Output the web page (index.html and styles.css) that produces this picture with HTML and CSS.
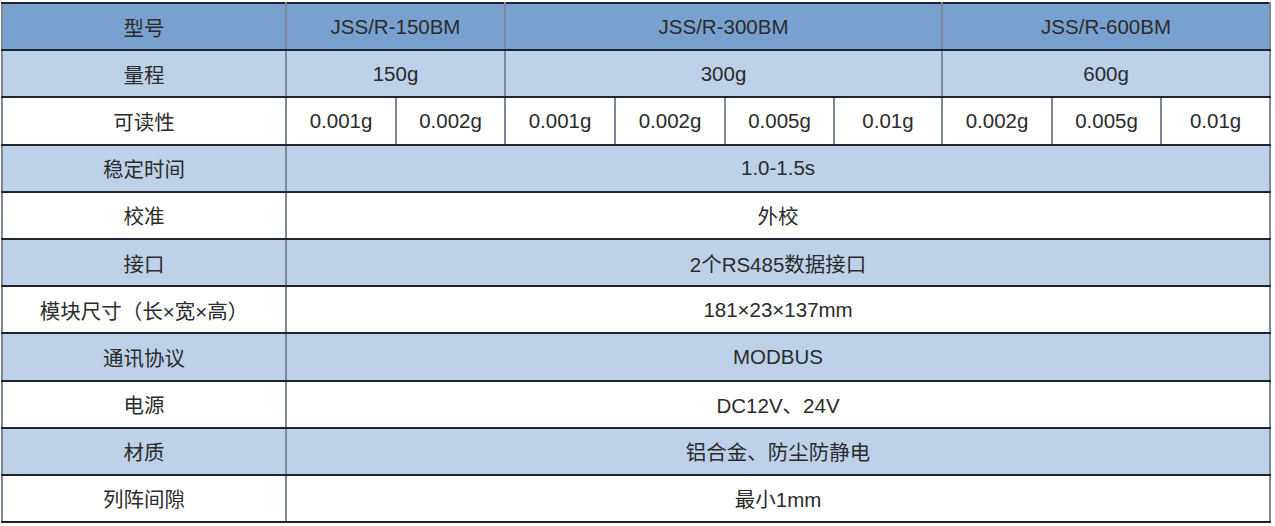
FILE: index.html
```html
<!DOCTYPE html>
<html lang="zh-CN">
<head>
<meta charset="utf-8">
<title>规格参数</title>
<link rel="stylesheet" href="styles.css">
</head>
<body>
<table class="spec">
  <colgroup>
    <col class="c-label">
    <col class="c-w110"><col class="c-w109"><col class="c-w110"><col class="c-w110"><col class="c-w109"><col class="c-w108"><col class="c-w110"><col class="c-w109"><col class="c-w109">
  </colgroup>
  <tr class="row-head">
    <td>型号</td>
    <td colspan="2">JSS/R-150BM</td>
    <td colspan="4">JSS/R-300BM</td>
    <td colspan="3">JSS/R-600BM</td>
  </tr>
  <tr class="row-light">
    <td>量程</td>
    <td colspan="2">150g</td>
    <td colspan="4">300g</td>
    <td colspan="3">600g</td>
  </tr>
  <tr class="row-white">
    <td>可读性</td>
    <td>0.001g</td>
    <td>0.002g</td>
    <td>0.001g</td>
    <td>0.002g</td>
    <td>0.005g</td>
    <td>0.01g</td>
    <td>0.002g</td>
    <td>0.005g</td>
    <td>0.01g</td>
  </tr>
  <tr class="row-light"><td>稳定时间</td><td colspan="9">1.0-1.5s</td></tr>
  <tr class="row-white"><td>校准</td><td colspan="9">外校</td></tr>
  <tr class="row-light"><td>接口</td><td colspan="9">2个RS485数据接口</td></tr>
  <tr class="row-white"><td>模块尺寸（长×宽×高）</td><td colspan="9">181×23×137mm</td></tr>
  <tr class="row-light"><td>通讯协议</td><td colspan="9">MODBUS</td></tr>
  <tr class="row-white"><td>电源</td><td colspan="9">DC12V、24V</td></tr>
  <tr class="row-light"><td>材质</td><td colspan="9">铝合金、防尘防静电</td></tr>
  <tr class="row-white"><td>列阵间隙</td><td colspan="9">最小1mm</td></tr>
</table>
</body>
</html>
```
FILE: styles.css
```css
html, body {
  margin: 0;
  padding: 0;
  background: #ffffff;
}

body {
  padding: 2px 0 0 1px;
}

.spec {
  border-collapse: collapse;
  table-layout: fixed;
  width: 1268px;
  height: 520px;
  font-family: "Liberation Sans", "Noto Sans CJK SC", sans-serif;
  font-size: 20.5px;
  color: #2b2b2b;
  border: 2px solid #3a3f4a;
}

.c-label { width: 284px; }
.c-w110 { width: 110px; }
.c-w109 { width: 109px; }
.c-w108 { width: 108px; }

.spec td {
  text-align: center;
  vertical-align: middle;
  padding: 0;
  border-top: 2px solid #1f2430;
  border-bottom: 2px solid #1f2430;
  border-left: 2px solid #7d8898;
  border-right: 2px solid #7d8898;
  white-space: nowrap;
}

.spec tr {
  height: 47.2px;
}

.row-head {
  background: #79a1cf;
}

.row-light {
  background: #bdd1e9;
}

.row-white {
  background: #ffffff;
}
```
